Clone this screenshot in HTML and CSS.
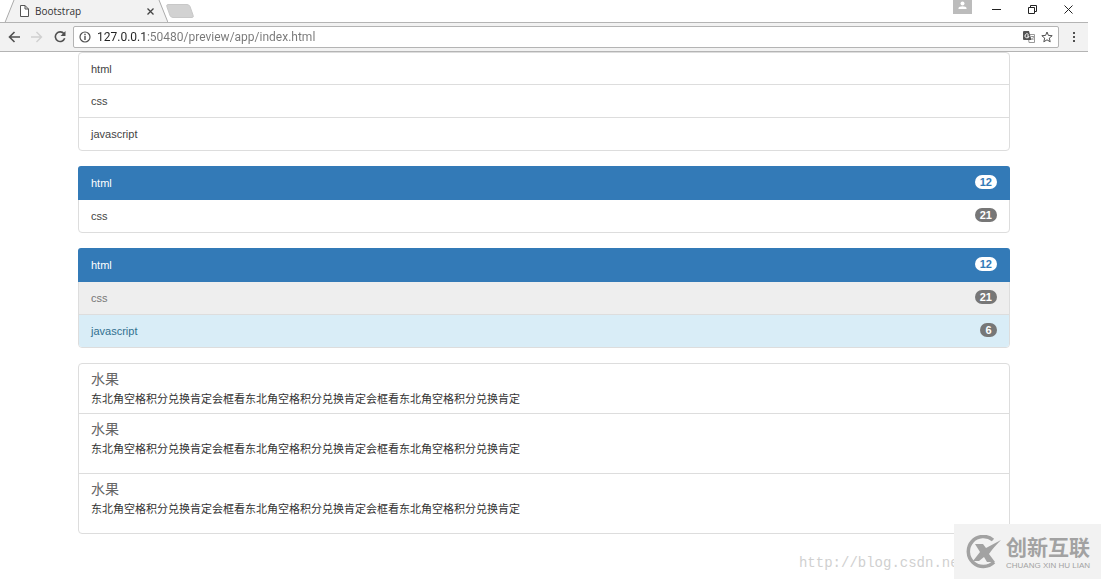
FILE: index.html
```html
<!DOCTYPE html>
<html lang="zh-CN">
<head>
<meta charset="utf-8">
<title>Bootstrap</title>
<link rel="stylesheet" href="styles.css">
</head>
<body>
<div class="window">
  <header class="tabstrip">
    <div class="tab">
      <svg class="tab-shape" width="168" height="23" viewBox="0 0 168 23"><path d="M0 22.500H5L13 0H159L168 22.500V23H0Z" fill="#f2f2f2"/><path d="M0 0H14L5 22H0Z" fill="#fff"/><path d="M0 22.500H5L14 0M159 0L168 22.500" fill="none" stroke="#aaa"/></svg>
      <svg class="page-icon" width="9" height="12" viewBox="0 0 9 12"><path d="M.5.5H5L8.500 4V11.500H.5ZM5 .5V4H8.500" fill="#fff" stroke="#555"/></svg>
      <span class="tab-title">Bootstrap</span>
      <button class="icon-button tab-close" aria-label="Close tab"><svg width="7" height="7" viewBox="0 0 7 7"><path d="M.5.5L6.500 6.500M6.500.5L.5 6.500" stroke="#444" stroke-width="1.300"/></svg></button>
    </div>
    <button class="icon-button new-tab" aria-label="New tab"><svg width="28" height="14" viewBox="0 0 28 14"><path d="M2 .5H21Q23 .5 24 2.500L27 11Q28 13.500 26 13.500H7Q5 13.500 4 11.500L1 3Q0 .5 2 .5Z" fill="#d2d2d2" stroke="#c8c8c8"/></svg></button>
    <div class="window-controls">
      <button class="icon-button profile" aria-label="Profile"><svg width="19" height="14" viewBox="0 0 19 14"><path d="M0 0H19V14H0Z" fill="#bcbcbc"/><circle cx="9.500" cy="3.500" r="2" fill="#fff"/><path d="M5.500 9V8Q6 6.200 9.500 6.200T13.500 8V9Z" fill="#fff"/></svg></button>
      <button class="icon-button control" aria-label="Minimize"><svg width="9" height="9" viewBox="0 0 9 9"><path d="M0 4.500H9" stroke="#222"/></svg></button>
      <button class="icon-button control" aria-label="Restore"><svg width="9" height="9" viewBox="0 0 9 9"><path d="M.5 2.500H6.500V8.500H.5ZM2.500 2.500V.5H8.500V6.500H6.500" fill="none" stroke="#222"/></svg></button>
      <button class="icon-button control" aria-label="Close"><svg width="9" height="9" viewBox="0 0 9 9"><path d="M.5.5L8.500 8.500M8.500.5L.5 8.500" stroke="#222"/></svg></button>
    </div>
  </header>
  <nav class="toolbar" aria-label="Browser">
    <button class="icon-button" aria-label="Back"><svg width="12" height="12" viewBox="0 0 12 12"><path d="M12 6H1.500M6.500 1L1.500 6L6.500 11" fill="none" stroke="#505050" stroke-width="1.600"/></svg></button>
    <button class="icon-button" aria-label="Forward"><svg width="12" height="12" viewBox="0 0 12 12"><path d="M0 6H10.500M5.500 1L10.500 6L5.500 11" fill="none" stroke="#d0d0d0" stroke-width="1.400"/></svg></button>
    <button class="icon-button" aria-label="Reload"><svg width="12" height="12" viewBox="0 0 12 12"><path d="M10 2.800A4.800 4.800 0 1 0 10.700 7.300" fill="none" stroke="#505050" stroke-width="1.600"/><path d="M11.500 0V5H6.500Z" fill="#505050"/></svg></button>
    <div class="address">
      <svg width="12" height="12" viewBox="0 0 12 12"><circle cx="6" cy="6" r="5" fill="none" stroke="#505050" stroke-width="1.200"/><path d="M6 5V9M6 2.800V4.200" stroke="#505050" stroke-width="1.400"/></svg>
      <input class="url" type="text" aria-label="Address" value="127.0.0.1:50480/preview/app/index.html">
      <button class="icon-button" aria-label="Translate"><svg width="12" height="12" viewBox="0 0 12 12"><path d="M5 3.500H11.500V11.500H6Z" fill="#fff" stroke="#999"/><path d="M0 1Q0 0 1 0H6L8.500 9H1Q0 9 0 8Z" fill="#555"/><path d="M5.500 3.500A2 2 0 1 0 6 5H4" fill="none" stroke="#fff"/><path d="M8 5.500H11M9.500 5V6M10.500 6Q10 8 8.500 9M8.500 7L10.500 9" fill="none" stroke="#888" stroke-width=".8"/></svg></button>
      <button class="icon-button" aria-label="Bookmark"><svg width="12" height="12" viewBox="0 0 12 12"><path d="M6 1L7.400 4.400L11.200 4.700L8.300 7.100L9.200 10.800L6 8.800L2.800 10.800L3.700 7.100L.8 4.700L4.600 4.400Z" fill="none" stroke="#505050"/></svg></button>
    </div>
    <button class="icon-button menu" aria-label="Menu"><svg width="4" height="12" viewBox="0 0 4 12"><path d="M1 1H3V3H1ZM1 5H3V7H1ZM1 9H3V11H1Z" fill="#505050"/></svg></button>
  </nav>
  <main class="container">
    <ul class="list-group">
      <li class="item">html</li>
      <li class="item">css</li>
      <li class="item">javascript</li>
    </ul>
    <ul class="list-group">
      <li class="item active">html<span class="badge">12</span></li>
      <li class="item">css<span class="badge">21</span></li>
    </ul>
    <div class="list-group">
      <a href="#" class="item active">html<span class="badge">12</span></a>
      <a href="#" class="item disabled">css<span class="badge">21</span></a>
      <a href="#" class="item info">javascript<span class="badge">6</span></a>
    </div>
    <div class="list-group">
      <a href="#" class="item article compact">
        <h4 class="heading">水果</h4>
        <p class="text">东北角空格积分兑换肯定会框看东北角空格积分兑换肯定会框看东北角空格积分兑换肯定</p>
      </a>
      <a href="#" class="item article">
        <h4 class="heading">水果</h4>
        <p class="text">东北角空格积分兑换肯定会框看东北角空格积分兑换肯定会框看东北角空格积分兑换肯定</p>
      </a>
      <a href="#" class="item article">
        <h4 class="heading">水果</h4>
        <p class="text">东北角空格积分兑换肯定会框看东北角空格积分兑换肯定会框看东北角空格积分兑换肯定</p>
      </a>
    </div>
  </main>
</div>
<div class="source">http://blog.csdn.net</div>
<div class="brand">
  <svg width="36" height="34" viewBox="0 0 36 34"><path d="M27 5A15 15 0 1 0 28 27" fill="none" stroke="#a2a2a2" stroke-width="3.500"/><path d="M9 9H17L20 13L35 5Q27 13 23 19L29 27H21L18 22L13 26H7L14 17Z" fill="#a2a2a2"/></svg>
  <div class="brand-words">
    <span class="brand-name">创新互联</span>
    <span class="brand-latin">CHUANG XIN HU LIAN</span>
  </div>
</div>
</body>
</html>
```
FILE: styles.css
```css
* { box-sizing: border-box; }
body {
  margin: 0;
  background: #fff;
  color: #333;
  font: 11px/16px "Liberation Sans", "Noto Sans CJK SC", sans-serif;
}
svg { display: block; flex: none; }
.window { margin-right: 13px; }
.icon-button {
  display: flex;
  align-items: center;
  justify-content: center;
  padding: 0;
  border: 0;
  background: none;
}
.tabstrip {
  display: flex;
  height: 23px;
  border-bottom: 1px solid #b4b4b4;
}
.tab {
  position: relative;
  display: flex;
  align-items: center;
  width: 168px;
  height: 23px;
  padding: 0 14px 1px 20px;
  gap: 6px;
}
.tab-shape { position: absolute; left: 0; top: 0; z-index: -1; }
.tab-title { flex: 1; font-family: "Open Sans", sans-serif; font-size: 10px; }
.new-tab { align-self: center; margin-left: -2px; }
.window-controls { display: flex; margin-left: auto; }
.profile { align-items: flex-start; margin-right: 6px; }
.control { width: 36px; height: 19px; }
.window-controls .control:last-child { margin-right: 2px; }
.toolbar {
  display: flex;
  align-items: center;
  gap: 11px;
  height: 29px;
  padding: 0 12px 0 8px;
  background: #f2f2f2;
  border-bottom: 1px solid #b4b4b4;
}
.address {
  display: flex;
  flex: 1;
  align-items: center;
  gap: 6px;
  height: 22px;
  margin: 0 2px 0 -4px;
  padding: 0 5px;
  border: 1px solid #b4b4b4;
  border-radius: 2px;
  background: #fff;
}
.url {
  flex: 1;
  min-width: 0;
  padding: 0;
  border: 0;
  outline: 0;
  font: 12px/18px Roboto, sans-serif;
  color: transparent;
  background: linear-gradient(90deg, #222 50px, #777 50px);
  -webkit-background-clip: text;
  background-clip: text;
}
.container { padding: 0 78px; }
.list-group {
  margin: 0 0 15px;
  padding: 0;
  list-style: none;
  border: 1px solid #ddd;
  border-radius: 4px;
}
.item {
  display: flex;
  align-items: center;
  justify-content: space-between;
  height: 33px;
  padding: 0 12px;
  border-top: 1px solid #ddd;
  color: #444;
  text-decoration: none;
}
.item:first-child { height: 31px; border-top: 0; border-radius: 3px 3px 0 0; }
.item:last-child { border-radius: 0 0 3px 3px; }
.item.active {
  height: 34px;
  margin: -1px -1px 0;
  padding: 0 13px;
  background: #337ab7;
  color: #fff;
}
.active + .item { height: 32px; border-top: 0; }
.item.disabled { background: #eee; color: #777; }
.item.info { background: #d9edf7; color: #31708f; }
.badge {
  min-width: 17px;
  margin-bottom: 2px;
  padding: 0 5px;
  border-radius: 8px;
  background: #777;
  color: #fff;
  font-weight: bold;
  line-height: 14px;
  text-align: center;
}
.active .badge { background: #fff; color: #337ab7; }
.item.article,
.item.article:first-child {
  display: block;
  height: auto;
  padding: 6px 12px 15px;
}
.item.article.compact { padding-bottom: 5px; }
.heading {
  margin: 0 0 2px;
  font-size: 14px;
  font-weight: 400;
  line-height: 18px;
  color: #666;
}
.text { margin: 0; line-height: 18px; color: #333; }
.source {
  position: absolute;
  right: 134px;
  bottom: 7px;
  font: 14px/18px "Liberation Mono", monospace;
  color: #d0d0d0;
}
.brand {
  position: absolute;
  right: 0;
  bottom: 0;
  display: flex;
  align-items: center;
  gap: 4px;
  padding: 8px 11px 8px 12px;
  background: #f2f2f2;
  color: #a2a2a2;
}
.brand-words { display: flex; flex-direction: column; white-space: nowrap; }
.brand-name { font: bold 21px/29px "Noto Sans CJK SC", sans-serif; }
.brand-latin { font-size: 8px; line-height: 10px; }
```
